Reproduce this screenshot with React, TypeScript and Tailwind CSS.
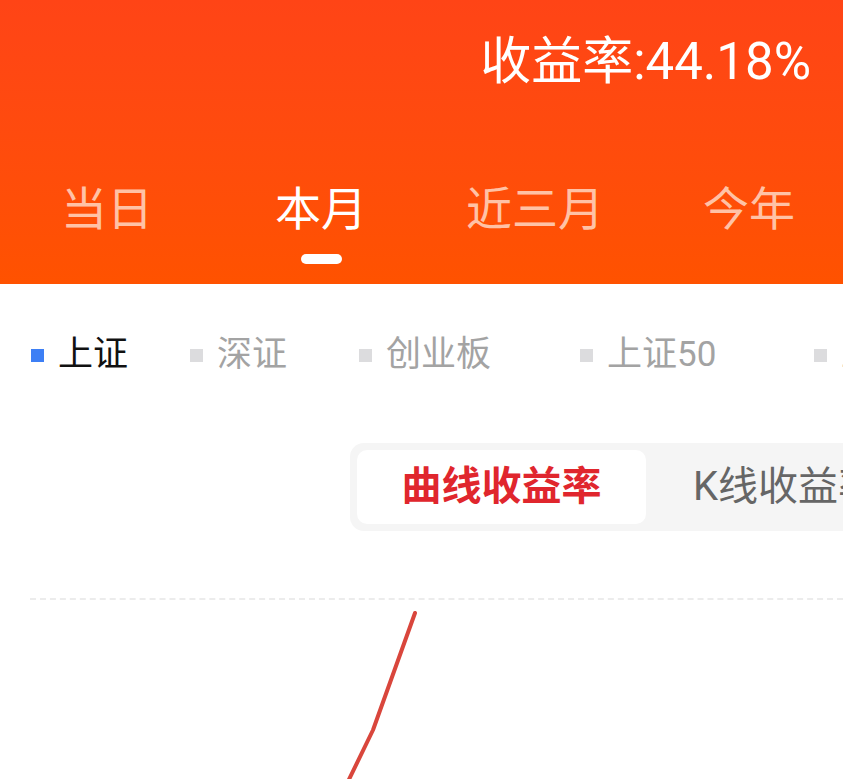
import React from "react";

const tabs = ["当日", "本月", "近三月", "今年"];

const legend = [
  { label: "上证", w: "w-[159px]", active: true },
  { label: "深证", w: "w-[169px]", active: false },
  { label: "创业板", w: "w-[221px]", active: false },
  { label: "上证50", w: "w-[234px]", active: false },
  { label: "上证180", w: "w-[200px]", active: false },
];

export default function App() {
  return (
    <div
      className="w-[843px] h-[779px] overflow-hidden bg-white"
      style={{ fontFamily: '"Roboto", "Noto Sans CJK SC", sans-serif' }}
    >
      <div className="h-[284px] bg-gradient-to-b from-[#ff4416] to-[#ff5200] flex flex-col">
        <div className="pt-[30px] pr-[32px] text-right text-white text-[51px] leading-[64px]">
          收益率:44.18%
        </div>
        <div className="flex mt-[88px] overflow-hidden">
          {tabs.map((t, i) => (
            <div key={t} className="w-[214px] shrink-0 flex flex-col items-center">
              <div
                className={
                  "text-[46px] leading-[54px] " +
                  (i === 1 ? "text-white" : "text-[#ffc2a6]")
                }
              >
                {t}
              </div>
              {i === 1 ? (
                <div className="mt-[18px] w-[41px] h-[10px] rounded-full bg-white" />
              ) : (
                <div className="mt-[18px] h-[10px]" />
              )}
            </div>
          ))}
        </div>
      </div>

      <div className="flex items-center pl-[31px] h-[142px] text-[35px] whitespace-nowrap overflow-hidden">
        {legend.map((l) => (
          <div key={l.label} className={"flex items-center shrink-0 " + l.w}>
            <div
              className={
                "w-[13px] h-[13px] " + (l.active ? "bg-[#3d7ff5]" : "bg-[#dcdcde]")
              }
            />
            <span className={"ml-[14px] " + (l.active ? "text-[#111]" : "text-[#a3a3a3]")}>
              {l.label}
            </span>
          </div>
        ))}
      </div>

      <div className="flex pl-[350px] mt-[17px]">
        <div className="flex shrink-0 bg-[#f5f5f5] rounded-[14px] p-[7px] w-[600px]">
          <div className="w-[289px] h-[74px] bg-white rounded-[10px] flex items-center justify-center text-[40px] font-bold text-[#e0262d]">
            曲线收益率
          </div>
          <div className="h-[74px] pl-[47px] flex items-center text-[40px] text-[#666] whitespace-nowrap">
            K线收益率
          </div>
        </div>
      </div>

      <div className="relative mt-[67px] ml-[30px] h-[200px]">
        <div className="border-t-2 border-dashed border-[#ececec]" />
        <svg className="absolute left-[-30px] top-0" width="843" height="200">
          <polyline
            points="415,15 373,132 340,200"
            fill="none"
            stroke="#d9463c"
            strokeWidth="4"
            strokeLinecap="round"
            strokeLinejoin="round"
          />
        </svg>
      </div>
    </div>
  );
}
